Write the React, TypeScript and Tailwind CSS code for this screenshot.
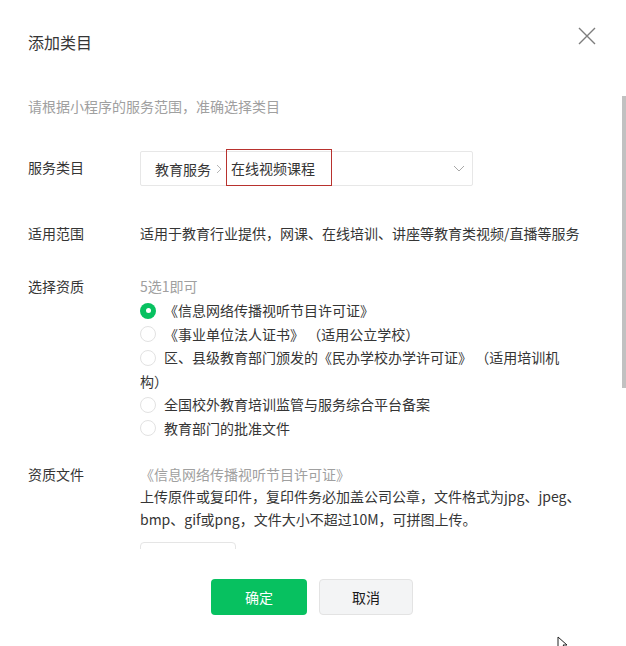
import React from "react";

const FONT = "font-['Noto_Sans_CJK_SC','Noto_Sans',sans-serif]";

const Radio = ({ checked }: { checked?: boolean }) =>
  checked ? (
    <span className="float-left flex w-[16px] h-[16px] mt-[3.5px] mr-[8px] rounded-full bg-[#07c160] items-center justify-center">
      <span className="w-[5px] h-[5px] rounded-full bg-white" />
    </span>
  ) : (
    <span className="float-left block w-[16px] h-[16px] mt-[3.5px] mr-[8px] rounded-full border border-[#e2e2e2]" />
  );

const Row = ({
  label,
  children,
  className = "",
  labelClass = "",
}: {
  label: string;
  children: React.ReactNode;
  className?: string;
  labelClass?: string;
}) => (
  <div className={`flex items-start ${className}`}>
    <div className={`w-[112px] shrink-0 leading-[22px] text-[#353535] ${labelClass}`}>{label}</div>
    <div className="flex-1 min-w-0">{children}</div>
  </div>
);

export default function App() {
  return (
    <div className={`relative w-[626px] h-[646px] bg-white overflow-hidden text-[14px] ${FONT}`}>
      {/* Header */}
      <header className="h-[95px] flex items-start justify-between pl-[28px] pr-[30px] pt-[27px]">
        <h2 className="mt-[4px] text-[16px] leading-[22px] text-[#353535] font-normal">添加类目</h2>
        <button className="w-[18px] h-[18px]">
          <svg viewBox="0 0 18 18" className="w-[18px] h-[18px]" fill="none" stroke="#7d7d7d" strokeWidth="1.4">
            <path d="M1 1L17 17M17 1L1 17" />
          </svg>
        </button>
      </header>

      {/* Body */}
      <div className="relative h-[454px] overflow-hidden px-[28px]">
        <div className="absolute right-0 top-[1px] w-[4px] h-[292px] bg-[#c1c1c1]" />

        <p className="leading-[22px] text-[#a0a0a0]">请根据小程序的服务范围，准确选择类目</p>

        <Row label="服务类目" className="mt-[34px]" labelClass="pt-[5px]">
          <div className="w-[333px] h-[35px] border border-[#e7e7e7] rounded-[2px] flex items-center pl-[14px] pr-[7px] text-[#353535]">
            <span className="leading-[22px]">教育服务</span>
            <svg viewBox="0 0 6 10" className="w-[6px] h-[10px] ml-[5px] mr-[4px]" fill="none" stroke="#b5b5b5" strokeWidth="1">
              <path d="M1 1L5 5L1 9" />
            </svg>
            <span className="h-[37px] -translate-y-[1px] border border-[#b8322e] pl-[4px] pr-[16px] flex items-center leading-[22px]">
              在线视频课程
            </span>
            <span className="flex-1" />
            <svg viewBox="0 0 12 7" className="w-[12px] h-[7px]" fill="none" stroke="#a8a8a8" strokeWidth="1">
              <path d="M1 1L6 6L11 1" />
            </svg>
          </div>
        </Row>

        <Row label="适用范围" className="mt-[36px]">
          <p className="leading-[22px] text-[#353535] whitespace-nowrap">
            适用于教育行业提供，网课、在线培训、讲座等教育类视频/直播等服务
          </p>
        </Row>

        <Row label="选择资质" className="mt-[31px]">
          <p className="leading-[22px] text-[#a0a0a0]">5选1即可</p>
          <div className="mt-[2px] text-[#353535] leading-[23.5px] w-[440px]">
            <div className="flow-root"><Radio checked />《信息网络传播视听节目许可证》</div>
            <div className="flow-root"><Radio />《事业单位法人证书》 （适用公立学校）</div>
            <div className="flow-root">
              <Radio />区、县级教育部门颁发的《民办学校办学许可证》 （适用培训机<br />构）
            </div>
            <div className="flow-root"><Radio />全国校外教育培训监管与服务综合平台备案</div>
            <div className="flow-root"><Radio />教育部门的批准文件</div>
          </div>
        </Row>

        <Row label="资质文件" className="mt-[23px]">
          <p className="leading-[22px] text-[#a0a0a0]">《信息网络传播视听节目许可证》</p>
          <p className="leading-[23px] text-[#353535] whitespace-nowrap">
            上传原件或复印件，复印件务必加盖公司公章，文件格式为jpg、jpeg、
            <br />
            bmp、gif或png，文件大小不超过10M，可拼图上传。
          </p>
          <div className="mt-[11px] w-[96px] h-[96px] rounded-[4px] border border-[#e5e5e5]" />
        </Row>
      </div>

      {/* Footer */}
      <footer className="pt-[30px] flex justify-center gap-[12px] -translate-x-[1px]">
        <button className="w-[96px] h-[36px] rounded-[4px] bg-[#07c160] text-white leading-[36px]">确定</button>
        <button className="w-[94px] h-[36px] rounded-[4px] bg-[#f3f4f5] border border-[#e3e3e3] text-[#1a1a1a]">取消</button>
      </footer>

      {/* mouse pointer */}
      <svg className="absolute left-[557px] top-[636px]" width="12" height="14" viewBox="0 0 12 14">
        <path d="M1 1L1 13L4 10L7 14L9 13L6 9L10 9Z" fill="white" stroke="#222" strokeWidth="1" />
      </svg>
    </div>
  );
}
